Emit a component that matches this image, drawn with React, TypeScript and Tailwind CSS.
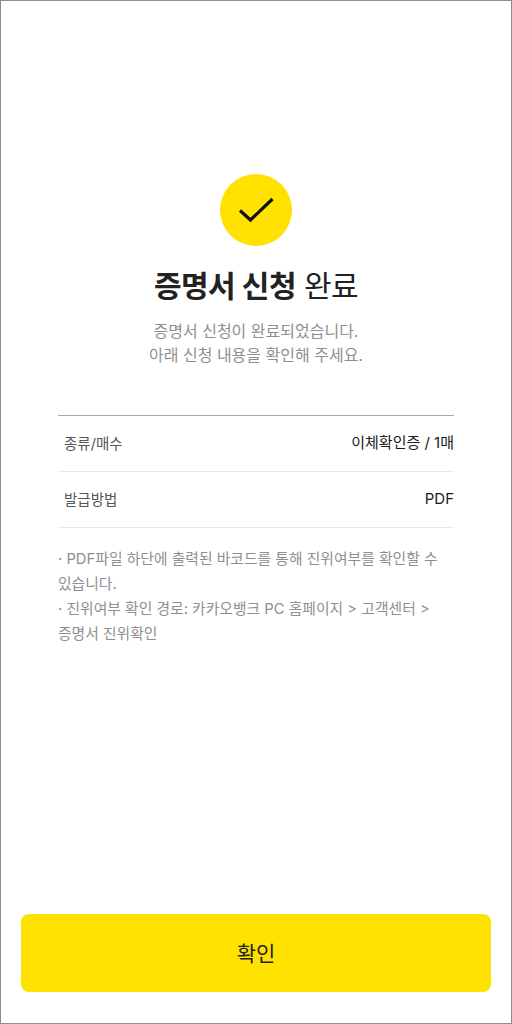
const font = "font-['Inter','Noto_Sans_CJK_KR',sans-serif]";

function InfoRow({ label, value }: { label: string; value: string }) {
  return (
    <div className="flex h-14 items-center justify-between border-b border-[#e8e8e8] pl-[6px]">
      <span className="text-[14.5px] text-[#555555]">{label}</span>
      <span className="text-[15px] text-[#1a1a1a]">{value}</span>
    </div>
  );
}

export default function App() {
  return (
    <div className={`${font} flex h-[1024px] flex-col border border-[#8c8c8c] bg-white`}>
      <div className="flex flex-col items-center pt-[173px]">
        <div className="flex h-[72px] w-[72px] items-center justify-center rounded-full bg-[#ffe200]">
          <svg width="36" height="28" viewBox="0 0 36 28" fill="none">
            <path d="M2 14.5 L12.5 24 L34.5 3" stroke="#111111" strokeWidth="3.2" />
          </svg>
        </div>
        <h1 className="mt-[19px] text-[30px] leading-[42px] tracking-[-0.5px] text-[#222222]">
          <span className="font-bold">증명서 신청</span> 완료
        </h1>
        <p className="mt-[12px] text-center text-[16px] leading-[24px] text-[#8f8f8f]">
          증명서 신청이 완료되었습니다.
          <br />
          아래 신청 내용을 확인해 주세요.
        </p>
      </div>
      <div className="mx-[57px] mt-[48px] border-t border-[#a8a8a8]">
        <InfoRow label="종류/매수" value="이체확인증 / 1매" />
        <InfoRow label="발급방법" value="PDF" />
        <p className="mt-[19px] break-keep text-[14.8px] leading-[25px] text-[#8f8f8f]">
          · PDF파일 하단에 출력된 바코드를 통해 진위여부를 확인할 수 있습니다.
          <br />· 진위여부 확인 경로: 카카오뱅크 PC 홈페이지 &gt; 고객센터 &gt; 증명서 진위확인
        </p>
      </div>
      <div className="mt-auto px-5 pb-[31px]">
        <button className="h-[78px] w-full rounded-[8px] bg-[#ffe200] pt-[2px] text-[21px] text-[#222222]">확인</button>
      </div>
    </div>
  );
}
